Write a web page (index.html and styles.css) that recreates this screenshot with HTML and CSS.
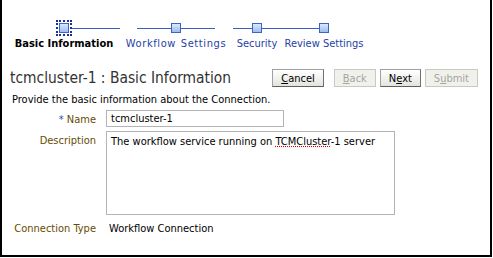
FILE: index.html
```html
<!DOCTYPE html>
<html lang="en">
<head>
    <meta charset="UTF-8">
    <meta name="viewport" content="width=device-width, initial-scale=1.0">
    <title>Create Connection</title>
    <link rel="stylesheet" href="styles.css">
</head>
<body>
    <div class="frame">
        <!-- Wizard train -->
        <div class="train">
            <div class="step step-first">
                <div class="track">
                    <span class="line blank"></span>
                    <span class="stop-focus"><span class="stop"></span></span>
                    <span class="line"></span>
                </div>
                <span class="step-label current">Basic Information</span>
            </div>
            <div class="step step-second">
                <div class="track">
                    <span class="line"></span>
                    <span class="stop"></span>
                    <span class="line"></span>
                </div>
                <a class="step-label wide" href="#">Workflow Settings</a>
            </div>
            <div class="step step-third">
                <div class="track">
                    <span class="line"></span>
                    <span class="stop"></span>
                    <span class="line"></span>
                </div>
                <a class="step-label" href="#">Security</a>
            </div>
            <div class="step step-fourth">
                <div class="track">
                    <span class="line"></span>
                    <span class="stop"></span>
                    <span class="line blank"></span>
                </div>
                <a class="step-label" href="#">Review Settings</a>
            </div>
        </div>

        <!-- Title and actions -->
        <div class="header">
            <h1>tcmcluster-1 : Basic Information</h1>
            <div class="actions">
                <button class="btn btn-cancel"><u>C</u>ancel</button>
                <button class="btn" disabled><u>B</u>ack</button>
                <button class="btn">N<u>e</u>xt</button>
                <button class="btn" disabled>S<u>u</u>bmit</button>
            </div>
        </div>

        <p class="intro">Provide the basic information about the Connection.</p>

        <div class="form">
            <label class="field-label"><span class="required">*</span> Name</label>
            <div class="input">tcmcluster-1</div>

            <label class="field-label">Description</label>
            <div class="textarea">The workflow service running on <span class="misspelled">TCMCluster</span>-1 server</div>

            <label class="field-label">Connection Type</label>
            <div class="value">Workflow Connection</div>
        </div>
    </div>
</body>
</html>
```

FILE: styles.css
```css
body {
    margin: 0;
    padding: 0;
    background: #fff;
    font-family: "DejaVu Sans Condensed", "DejaVu Sans", sans-serif;
    font-size: 11px;
    color: #000;
}
.frame {
    box-sizing: border-box;
    width: 492px;
    height: 257px;
    border-left: 2px solid #000;
    border-right: 2px solid #000;
    border-bottom: 2px solid #000;
}

/* train */
.train {
    display: flex;
    padding: 20px 0 0 6px;
}
.step {
    display: flex;
    flex-direction: column;
    align-items: center;
}
.step-first { width: 112px; }
.step-second { width: 78px; margin-left: 17px; }
.step-third { width: 48px; margin-left: 18px; }
.step-fourth { width: 86px; }
.track {
    display: flex;
    align-items: center;
    width: 100%;
    height: 16px;
}
.line {
    flex: 1;
    height: 1px;
    background: #3b5fc6;
}
.line.blank {
    background: transparent;
}
.stop {
    box-sizing: border-box;
    width: 10px;
    height: 10px;
    border: 1px solid #3b63c9;
    background: linear-gradient(#dbe8fb, #9dbdee);
}
.stop-focus {
    display: flex;
    padding: 1px;
    border: 2px dotted #1c2f9e;
}
.step-label {
    display: flex;
    justify-content: center;
    width: 100%;
    margin-top: 1px;
    white-space: nowrap;
    color: #1f3fa6;
    text-decoration: none;
}
.step-label.wide {
    letter-spacing: 0.6px;
    word-spacing: 1px;
}
.step-label.current {
    color: #000;
    font-weight: bold;
}

/* header */
.header {
    display: flex;
    align-items: center;
    justify-content: space-between;
    padding: 19px 12px 0 8px;
}
h1 {
    margin: 0;
    font-size: 15.4px;
    font-weight: normal;
    color: #333;
}
.actions {
    display: flex;
    gap: 4px;
}
.btn {
    height: 18px;
    padding: 0 8px;
    font-family: inherit;
    font-size: 11px;
    color: #000;
    background: linear-gradient(#fff, #e4e4de);
    border: 1px solid #7f7f7f;
    border-color: #a0a0a0 #707070 #606060 #a0a0a0;
}
.btn-cancel {
    margin-right: 6px;
}
.btn:disabled {
    color: #a5a5a0;
    background: #f1f1ec;
    border-color: #c9c9c4;
}

.intro {
    margin: 6px 0 0 10px;
}

/* form */
.form {
    display: grid;
    grid-template-columns: 94px 289px;
    column-gap: 10px;
    row-gap: 4px;
    margin-top: 4px;
}
.field-label {
    text-align: right;
    color: #664c00;
    padding-top: 3px;
}
.required {
    color: #2c4fb4;
}
.input {
    box-sizing: border-box;
    width: 178px;
    height: 17px;
    padding: 1px 4px;
    border: 1px solid #b4b4b4;
}
.textarea {
    box-sizing: border-box;
    height: 84px;
    padding: 3px 4px;
    border: 1px solid #b4b4b4;
}
.misspelled {
    text-decoration: underline dotted #e00000;
}
.value {
    padding: 3px 0 0 3px;
}
```
